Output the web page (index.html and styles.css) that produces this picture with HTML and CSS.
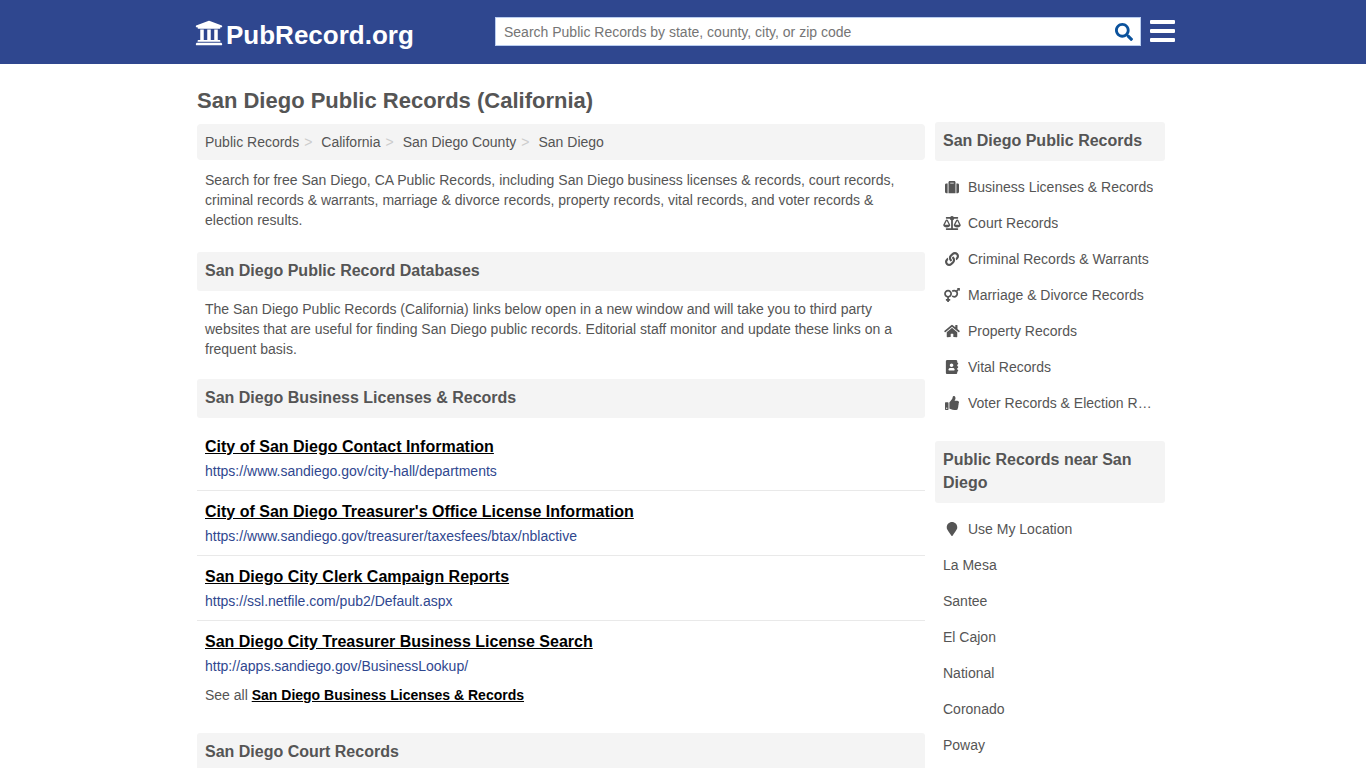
FILE: index.html
```html
<!DOCTYPE html>
<html lang="en">
<head>
<meta charset="utf-8">
<meta name="viewport" content="width=device-width, initial-scale=1">
<title>San Diego Public Records (California)</title>
<link rel="stylesheet" href="styles.css">
</head>
<body>
<header class="site-header">
  <div class="header-inner">
    <a class="logo" href="#">
      <svg class="logo-icon" viewBox="0 0 512 512" aria-hidden="true"><path d="M496 128v16a8 8 0 0 1-8 8h-24v12c0 6.627-5.373 12-12 12H60c-6.627 0-12-5.373-12-12v-12H24a8 8 0 0 1-8-8v-16a8 8 0 0 1 4.941-7.392l232-88a7.996 7.996 0 0 1 6.118 0l232 88A8 8 0 0 1 496 128zm-24 304H40c-13.255 0-24 10.745-24 24v16a8 8 0 0 0 8 8h464a8 8 0 0 0 8-8v-16c0-13.255-10.745-24-24-24zM96 192v192H60c-6.627 0-12 5.373-12 12v20h416v-20c0-6.627-5.373-12-12-12h-36V192h-64v192h-64V192h-64v192h-64V192H96z"/></svg>
      <span>PubRecord.org</span>
    </a>
    <div class="header-tools">
      <form class="search">
        <input class="search-input" type="text" aria-label="Search public records" placeholder="Search Public Records by state, county, city, or zip code">
        <button class="search-button" type="button" aria-label="Search">
          <svg viewBox="0 0 512 512" aria-hidden="true"><path d="M505 442.7L405.3 343c-4.5-4.5-10.6-7-17-7H372c27.6-35.3 44-79.7 44-128C416 93.1 322.9 0 208 0S0 93.1 0 208s93.1 208 208 208c48.3 0 92.7-16.4 128-44v16.3c0 6.4 2.5 12.5 7 17l99.7 99.7c9.4 9.4 24.6 9.4 33.9 0l28.3-28.3c9.4-9.4 9.4-24.6.1-34zM208 336c-70.7 0-128-57.2-128-128 0-70.7 57.2-128 128-128 70.7 0 128 57.2 128 128 0 70.7-57.2 128-128 128z"/></svg>
        </button>
      </form>
      <button class="menu-button" type="button" aria-label="Menu">
        <svg viewBox="0 0 25 22" aria-hidden="true"><path d="M1 0h23a1 1 0 0 1 1 1v2a1 1 0 0 1-1 1H1a1 1 0 0 1-1-1V1a1 1 0 0 1 1-1zM1 9h23a1 1 0 0 1 1 1v2a1 1 0 0 1-1 1H1a1 1 0 0 1-1-1v-2a1 1 0 0 1 1-1zM1 18h23a1 1 0 0 1 1 1v2a1 1 0 0 1-1 1H1a1 1 0 0 1-1-1v-2a1 1 0 0 1 1-1z"/></svg>
      </button>
    </div>
  </div>
</header>
<div class="page">
  <h1 class="page-title">San Diego Public Records (California)</h1>
  <div class="columns">
    <main class="content">
      <nav aria-label="Breadcrumb">
        <ol class="breadcrumb">
          <li><a href="#">Public Records</a></li>
          <li><a href="#">California</a></li>
          <li><a href="#">San Diego County</a></li>
          <li><a href="#">San Diego</a></li>
        </ol>
      </nav>
      <p class="text">Search for free San Diego, CA Public Records, including San Diego business licenses &amp; records, court records, criminal records &amp; warrants, marriage &amp; divorce records, property records, vital records, and voter records &amp; election results.</p>
      <h2 class="bar">San Diego Public Record Databases</h2>
      <p class="text">The San Diego Public Records (California) links below open in a new window and will take you to third party websites that are useful for finding San Diego public records. Editorial staff monitor and update these links on a frequent basis.</p>
      <h2 class="bar">San Diego Business Licenses &amp; Records</h2>
      <ul class="links">
        <li><a class="link-title" href="#">City of San Diego Contact Information</a><a class="link-url" href="#">https://www.sandiego.gov/city-hall/departments</a></li>
        <li><a class="link-title" href="#">City of San Diego Treasurer's Office License Information</a><a class="link-url" href="#">https://www.sandiego.gov/treasurer/taxesfees/btax/nblactive</a></li>
        <li><a class="link-title" href="#">San Diego City Clerk Campaign Reports</a><a class="link-url" href="#">https://ssl.netfile.com/pub2/Default.aspx</a></li>
        <li><a class="link-title" href="#">San Diego City Treasurer Business License Search</a><a class="link-url" href="#">http://apps.sandiego.gov/BusinessLookup/</a></li>
      </ul>
      <p class="see-all">See all <a href="#">San Diego Business Licenses &amp; Records</a></p>
      <h2 class="bar">San Diego Court Records</h2>
    </main>
    <aside class="sidebar">
      <h2 class="bar">San Diego Public Records</h2>
      <ul class="side-list">
        <li><a href="#"><svg viewBox="0 0 512 512" aria-hidden="true"><path d="M128 480h256V80c0-26.5-21.5-48-48-48H176c-26.5 0-48 21.5-48 48v400zm64-384h128v32H192V96zm320 80v256c0 26.5-21.5 48-48 48h-48V128h48c26.5 0 48 21.5 48 48zM96 480H48c-26.5 0-48-21.5-48-48V176c0-26.5 21.5-48 48-48h48v352z"/></svg><span>Business Licenses &amp; Records</span></a></li>
        <li><a href="#"><svg viewBox="0 0 640 512" aria-hidden="true"><path d="M256 336h-.02c0-16.18 1.34-8.73-85.05-181.51-17.65-35.29-68.19-35.36-85.87 0C-2.06 328.75.02 320.33.02 336H0c0 44.18 57.31 80 128 80s128-35.82 128-80zM128 176l72 144H56l72-144zm511.98 160c0-16.18 1.34-8.73-85.05-181.51-17.65-35.29-68.19-35.36-85.87 0-87.12 174.26-85.04 165.84-85.04 181.51H384c0 44.18 57.31 80 128 80s128-35.82 128-80h-.02zM440 320l72-144 72 144H440zm88 128H352V153.25c23.51-10.29 41.16-31.48 46.39-57.25H528c8.84 0 16-7.16 16-16V48c0-8.84-7.16-16-16-16H383.64C369.04 12.68 346.09 0 320 0s-49.04 12.68-63.64 32H112c-8.84 0-16 7.16-16 16v32c0 8.84 7.16 16 16 16h129.61c5.23 25.76 22.87 46.96 46.39 57.25V448H112c-8.84 0-16 7.16-16 16v32c0 8.84 7.16 16 16 16h416c8.84 0 16-7.16 16-16v-32c0-8.84-7.16-16-16-16z"/></svg><span>Court Records</span></a></li>
        <li><a href="#"><svg viewBox="0 0 512 512" aria-hidden="true"><path d="M326.612 185.391c59.747 59.809 58.927 155.698.36 214.59-.11.12-.24.25-.36.37l-67.2 67.2c-59.27 59.27-155.699 59.262-214.96 0-59.27-59.26-59.27-155.7 0-214.96l37.106-37.106c9.84-9.84 26.786-3.3 27.294 10.606.648 17.722 3.826 35.527 9.69 52.721 1.986 5.822.567 12.262-3.783 16.612l-13.087 13.087c-28.026 28.026-28.905 73.66-1.155 101.96 28.024 28.579 74.086 28.749 102.325.51l67.2-67.19c28.191-28.191 28.073-73.757 0-101.83-3.701-3.694-7.429-6.564-10.341-8.569a16.037 16.037 0 0 1-6.947-12.606c-.396-10.567 3.348-21.456 11.698-29.806l21.054-21.055c5.521-5.521 14.182-6.199 20.584-1.731a152.482 152.482 0 0 1 20.522 17.197zM467.547 44.449c-59.261-59.262-155.69-59.27-214.96 0l-67.2 67.2c-.12.12-.25.25-.36.37-58.566 58.892-59.387 154.781.36 214.59a152.454 152.454 0 0 0 20.521 17.196c6.402 4.468 15.064 3.789 20.584-1.731l21.054-21.055c8.35-8.35 12.094-19.239 11.698-29.806a16.037 16.037 0 0 0-6.947-12.606c-2.912-2.005-6.64-4.875-10.341-8.569-28.073-28.073-28.191-73.639 0-101.83l67.2-67.19c28.239-28.239 74.3-28.069 102.325.51 27.75 28.3 26.872 73.934-1.155 101.96l-13.087 13.087c-4.35 4.35-5.769 10.79-3.783 16.612 5.864 17.194 9.042 34.999 9.69 52.721.509 13.906 17.454 20.446 27.294 10.606l37.106-37.106c59.271-59.259 59.271-155.699.001-214.959z"/></svg><span>Criminal Records &amp; Warrants</span></a></li>
        <li><a href="#"><svg viewBox="0 0 576 512" aria-hidden="true"><path d="M564 0h-79c-10.7 0-16 12.9-8.5 20.5l16.9 16.9-48.7 48.7C422.5 72.1 396.2 64 368 64c-33.7 0-64.6 11.6-89.2 30.9 14 16.7 25 36 32.1 57.1 14.5-14.8 34.7-24 57.1-24 44.1 0 80 35.9 80 80s-35.9 80-80 80c-22.3 0-42.6-9.2-57.1-24-7.1 21.1-18 40.4-32.1 57.1 24.5 19.4 55.5 30.9 89.2 30.9 79.5 0 144-64.5 144-144 0-28.2-8.1-54.5-22.1-76.7l48.7-48.7 16.9 16.9c2.4 2.4 5.5 3.5 8.4 3.5 6.2 0 12.1-4.8 12.1-12V12c0-6.6-5.4-12-12-12zM144 64C64.5 64 0 128.5 0 208c0 68.5 47.9 125.9 112 140.4V400H76c-6.6 0-12 5.4-12 12v40c0 6.6 5.4 12 12 12h36v36c0 6.6 5.4 12 12 12h40c6.6 0 12-5.4 12-12v-36h36c6.6 0 12-5.4 12-12v-40c0-6.6-5.4-12-12-12h-36v-51.6c64.1-14.6 112-71.9 112-140.4 0-79.5-64.5-144-144-144zm0 224c-44.1 0-80-35.9-80-80s35.9-80 80-80 80 35.9 80 80-35.9 80-80 80z"/></svg><span>Marriage &amp; Divorce Records</span></a></li>
        <li><a href="#"><svg viewBox="0 0 576 512" aria-hidden="true"><path d="M280.37 148.26L96 300.11V464a16 16 0 0 0 16 16l112.06-.29a16 16 0 0 0 15.92-16V368a16 16 0 0 1 16-16h64a16 16 0 0 1 16 16v95.64a16 16 0 0 0 16 16.05L464 480a16 16 0 0 0 16-16V300L295.67 148.26a12.19 12.19 0 0 0-15.3 0zM571.6 251.47L488 182.56V44.05a12 12 0 0 0-12-12h-56a12 12 0 0 0-12 12v72.61L318.47 43a48 48 0 0 0-61 0L4.34 251.47a12 12 0 0 0-1.6 16.9l25.5 31A12 12 0 0 0 45.15 301l235.22-193.74a12.19 12.19 0 0 1 15.3 0L530.9 301a12 12 0 0 0 16.9-1.6l25.5-31a12 12 0 0 0-1.7-16.93z"/></svg><span>Property Records</span></a></li>
        <li><a href="#"><svg viewBox="0 0 448 512" aria-hidden="true"><path d="M436 160c6.6 0 12-5.4 12-12v-40c0-6.6-5.4-12-12-12h-20V48c0-26.5-21.5-48-48-48H48C21.5 0 0 21.5 0 48v416c0 26.5 21.5 48 48 48h320c26.5 0 48-21.5 48-48v-48h20c6.6 0 12-5.4 12-12v-40c0-6.6-5.4-12-12-12h-20v-64h20c6.6 0 12-5.4 12-12v-40c0-6.6-5.4-12-12-12h-20v-64h20zm-228-32c35.3 0 64 28.7 64 64s-28.7 64-64 64-64-28.7-64-64 28.7-64 64-64zm112 236.8c0 10.6-10 19.2-22.4 19.2H118.4C106 384 96 375.4 96 364.8v-19.2c0-31.8 30.1-57.6 67.2-57.6h5c12.3 5.1 25.7 8 39.8 8s27.6-2.9 39.8-8h5c37.1 0 67.2 25.8 67.2 57.6v19.2z"/></svg><span>Vital Records</span></a></li>
        <li><a href="#"><svg viewBox="0 0 512 512" aria-hidden="true"><path d="M104 224H24c-13.255 0-24 10.745-24 24v240c0 13.255 10.745 24 24 24h80c13.255 0 24-10.745 24-24V248c0-13.255-10.745-24-24-24zM64 472c-13.255 0-24-10.745-24-24s10.745-24 24-24 24 10.745 24 24-10.745 24-24 24zM384 81.452c0 42.416-25.97 66.208-33.277 94.548h101.723c33.397 0 59.397 27.746 59.553 58.098.084 17.938-7.546 37.249-19.439 49.197l-.11.11c9.836 23.337 8.237 56.037-9.308 79.469 8.681 25.895-.069 57.704-16.382 74.757 4.298 17.598 2.244 32.575-6.148 44.632C440.202 511.587 389.616 512 346.839 512l-2.845-.001c-48.287-.017-87.806-17.598-119.56-31.725-15.957-7.099-36.821-15.887-52.651-16.178-6.54-.12-11.783-5.457-11.783-11.998v-213.77c0-3.2 1.282-6.271 3.558-8.521 39.614-39.144 56.648-80.587 89.117-113.111 14.804-14.832 20.188-37.236 25.393-58.902C282.515 39.293 291.817 0 312 0c24 0 72 8 72 81.452z"/></svg><span>Voter Records &amp; Election Results</span></a></li>
      </ul>
      <h2 class="bar">Public Records near San Diego</h2>
      <ul class="side-list">
        <li><a href="#"><svg viewBox="0 0 384 512" aria-hidden="true"><path d="M172.268 501.67C26.97 291.031 0 269.413 0 192 0 85.961 85.961 0 192 0s192 85.961 192 192c0 77.413-26.97 99.031-172.268 309.67-9.535 13.774-29.93 13.773-39.464 0z"/></svg><span>Use My Location</span></a></li>
        <li><a href="#">La Mesa</a></li>
        <li><a href="#">Santee</a></li>
        <li><a href="#">El Cajon</a></li>
        <li><a href="#">National</a></li>
        <li><a href="#">Coronado</a></li>
        <li><a href="#">Poway</a></li>
      </ul>
    </aside>
  </div>
</div>
</body>
</html>
```
FILE: styles.css
```css
* {
  box-sizing: border-box;
}

body {
  margin: 0;
  background: #fff;
  color: #555;
  font: 14px/20px "Liberation Sans", Arial, sans-serif;
}

h1, h2, p, ul, ol {
  margin: 0;
  padding: 0;
}

ul, ol {
  list-style: none;
}

a {
  color: inherit;
  text-decoration: none;
}

svg {
  fill: currentColor;
}

button {
  padding: 0;
  border: 0;
  background: none;
  cursor: pointer;
}

.site-header {
  background: #2f478f;
}

.header-inner {
  display: flex;
  align-items: center;
  justify-content: space-between;
  gap: 24px;
  max-width: 984px;
  min-height: 64px;
  margin: 0 auto;
  padding-left: 4px;
}

.logo {
  display: flex;
  align-items: center;
  gap: 3px;
  padding-top: 6px;
  color: #fff;
  font-size: 26px;
  font-weight: bold;
  line-height: 32px;
}

.logo-icon {
  width: 28px;
  height: 28px;
  margin-bottom: 4px;
}

.header-tools {
  display: flex;
  flex: 0 1 680px;
  align-items: center;
  gap: 9px;
  padding-bottom: 2px;
}

.search {
  display: flex;
  flex: 1;
  height: 29px;
  border: 1px solid #b9cdf0;
  background: #fff;
}

.search-input {
  flex: 1;
  min-width: 0;
  padding: 2px 8px 0;
  border: 0;
  outline: 0;
  background: none;
  color: #555;
  font: inherit;
}

.search-input::placeholder {
  color: #757575;
  opacity: 1;
}

.search-button {
  display: grid;
  place-items: center;
  width: 32px;
  padding-top: 2px;
  color: #0b529c;
}

.search-button svg {
  width: 18px;
  height: 18px;
}

.menu-button {
  display: grid;
  color: #fff;
}

.menu-button svg {
  width: 25px;
  height: 22px;
}

.page {
  max-width: 972px;
  margin: 0 auto;
  padding: 23px 4px 0 0;
}

.page-title {
  font-size: 22px;
  line-height: 28px;
}

.columns {
  display: flex;
  align-items: flex-start;
  gap: 10px;
  padding-top: 7px;
}

.content {
  flex: 1;
  min-width: 0;
  padding-top: 2px;
}

.sidebar {
  flex: 0 0 230px;
  min-width: 0;
}

.breadcrumb {
  display: flex;
  flex-wrap: wrap;
  padding: 8px;
  border-radius: 4px;
  background: #f4f4f4;
}

.breadcrumb li + li::before {
  content: ">";
  padding: 0 9px 0 5px;
  color: #ccc;
}

.bar {
  padding: 7px 8px 9px;
  border-radius: 3px;
  background: #f4f4f4;
  font-size: 16px;
  line-height: 23px;
}

.text {
  padding: 10px 20px 22px 8px;
}

.bar + .text {
  padding-top: 8px;
  padding-bottom: 20px;
}

.links {
  padding-top: 8px;
}

.links li {
  display: flex;
  flex-direction: column;
  align-items: flex-start;
  gap: 2px;
  padding: 9px 8px;
  border-bottom: 1px solid #e9e9e9;
}

.links li:last-child {
  border-bottom: 0;
}

.link-title {
  color: #000;
  font-size: 16px;
  font-weight: bold;
  line-height: 24px;
  text-decoration: underline;
}

.link-url {
  color: #2f478f;
}

.see-all {
  padding: 0 8px 28px;
}

.see-all a {
  color: #000;
  font-weight: bold;
  text-decoration: underline;
}

.side-list {
  padding: 8px 8px 20px;
}

.side-list a {
  display: flex;
  align-items: center;
  gap: 7px;
  padding: 8px 2px 8px 0;
}

.side-list svg {
  flex: none;
  width: 18px;
  height: 14px;
}

.side-list span {
  overflow: hidden;
  text-overflow: ellipsis;
  white-space: nowrap;
}
```
